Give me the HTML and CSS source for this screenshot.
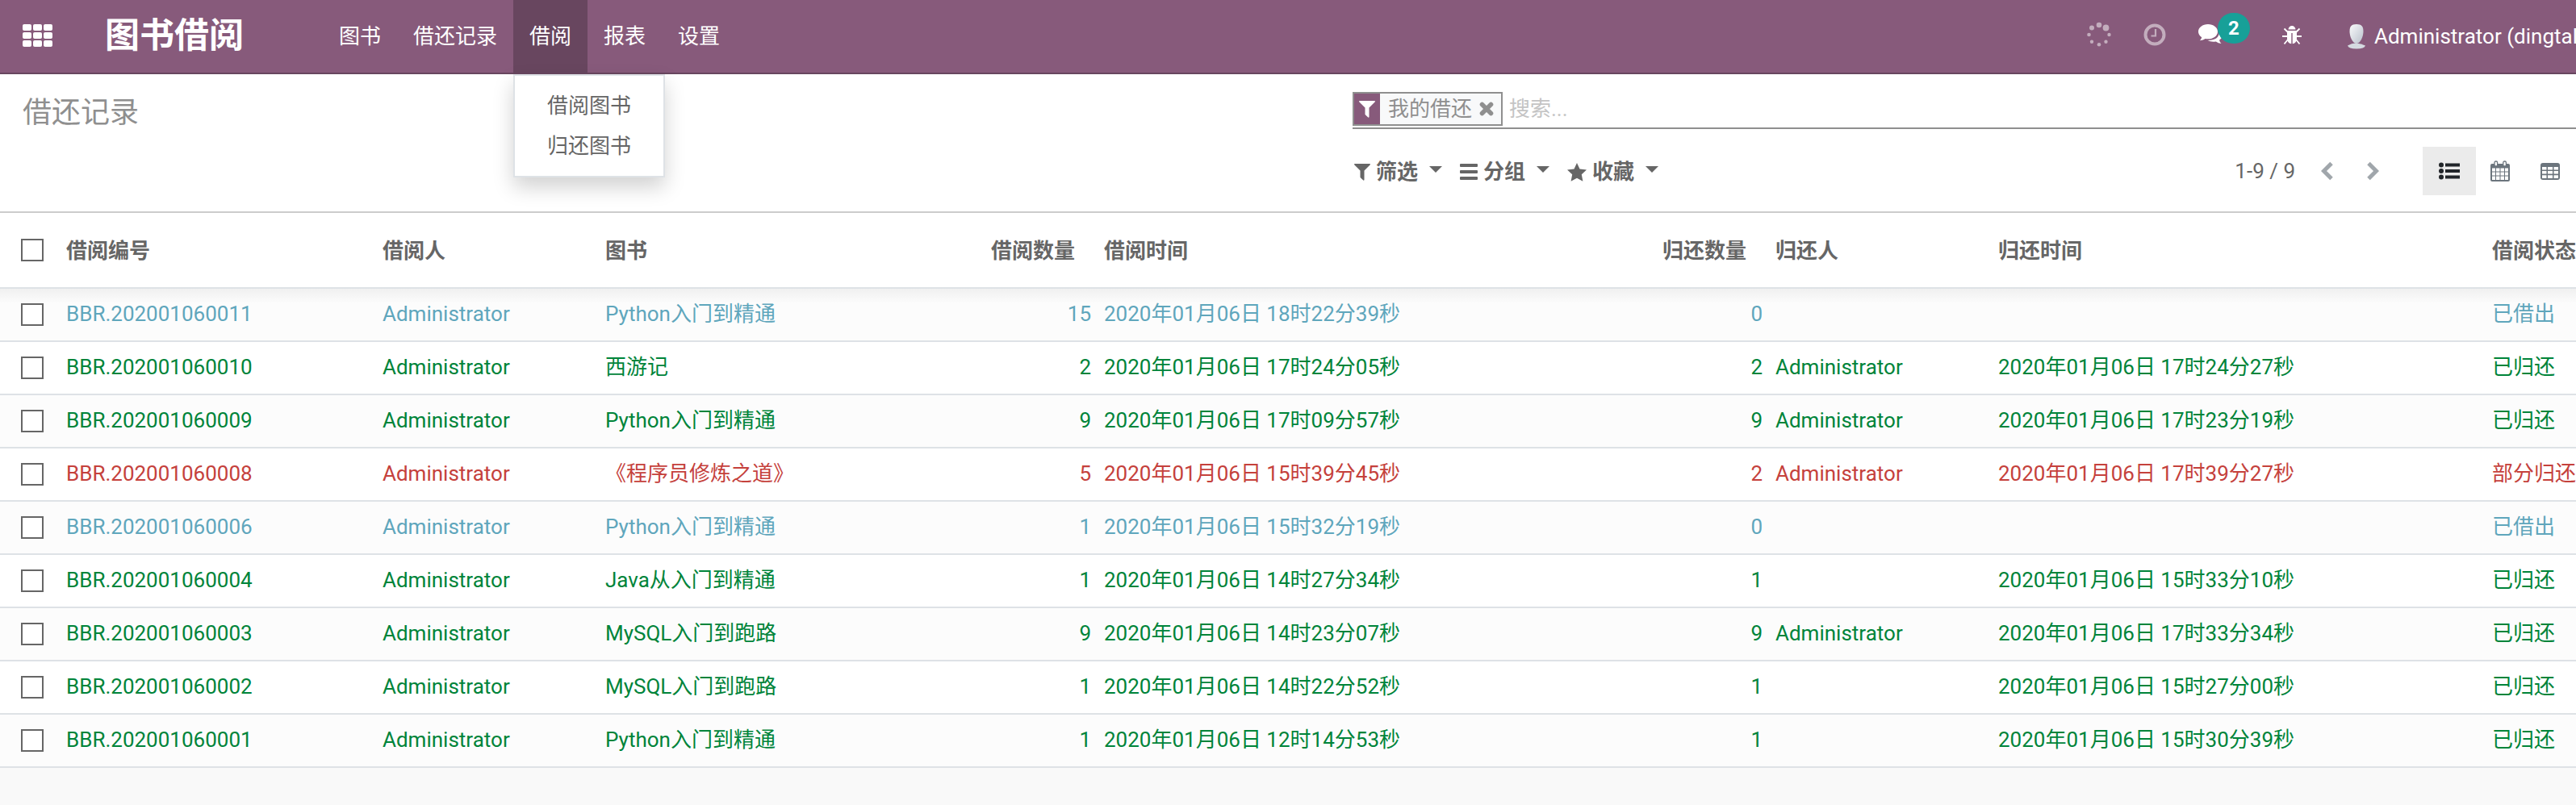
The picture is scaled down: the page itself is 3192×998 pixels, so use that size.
FILE: index.html
```html
<!DOCTYPE html>
<html lang="zh-CN">
<head>
<meta charset="utf-8">
<title>借还记录</title>
<link rel="stylesheet" href="styles.css">
</head>
<body>
<svg class="sprite" aria-hidden="true">
  <symbol id="i-funnel" viewBox="0 0 20 21"><path d="M0.6 0h18.8q.8.4.4 1.2L12.500 8.500V20q-.3 1-1.200.6L7.800 17.200q-.3-.3-.3-.7V8.500L.2 1.200Q-.2.400.6 0z"/></symbol>
  <symbol id="i-caret" viewBox="0 0 16 8"><path d="M0 0h16L8 8z"/></symbol>
</svg>

<header class="navbar">
  <button class="apps" type="button" aria-label="应用">
    <svg width="38" height="28" viewBox="0 0 38 28"><g fill="currentColor"><rect x="0" y="0" width="11" height="8" rx="2"/><rect x="13" y="0" width="11" height="8" rx="2"/><rect x="26" y="0" width="11" height="8" rx="2"/><rect x="0" y="10" width="11" height="8" rx="2"/><rect x="13" y="10" width="11" height="8" rx="2"/><rect x="26" y="10" width="11" height="8" rx="2"/><rect x="0" y="20" width="11" height="8" rx="2"/><rect x="13" y="20" width="11" height="8" rx="2"/><rect x="26" y="20" width="11" height="8" rx="2"/></g></svg>
  </button>
  <a class="brand" href="#">图书借阅</a>
  <nav class="menu">
    <a class="menu-link" href="#">图书</a>
    <a class="menu-link" href="#">借还记录</a>
    <div class="menu-group">
      <a class="menu-link active" href="#" aria-expanded="true">借阅</a>
      <div class="dropdown">
        <a class="dropdown-item" href="#">借阅图书</a>
        <a class="dropdown-item" href="#">归还图书</a>
      </div>
    </div>
    <a class="menu-link" href="#">报表</a>
    <a class="menu-link" href="#">设置</a>
  </nav>
  <div class="systray">
    <button class="tray spinner" type="button" aria-label="加载">
      <svg width="30" height="32" viewBox="0 0 30 32"><g fill="currentColor"><circle cx="15" cy="4" r="3.300"/><circle cx="23.500" cy="7.500" r="3.900"/><circle cx="27.500" cy="16" r="2.200"/><circle cx="23.500" cy="24.700" r="2.200"/><circle cx="15" cy="28.300" r="2.300"/><circle cx="6" cy="24.700" r="2.200"/><circle cx="2.500" cy="16" r="2.300"/><circle cx="6" cy="7.500" r="3"/></g></svg>
    </button>
    <button class="tray clock" type="button" aria-label="活动">
      <svg width="28" height="28" viewBox="0 0 28 28" fill="none" stroke="currentColor"><circle cx="14" cy="14" r="11.500" stroke-width="4"/><path d="M15 7v8.500H9.500" stroke-width="2.200"/></svg>
    </button>
    <button class="tray chat" type="button" aria-label="消息">
      <svg width="30" height="26" viewBox="0 0 30 26" fill="currentColor"><path d="M12 0C18.600 0 24 4 24 9.200S18.600 18.300 12 18.300q-1.700 0-3.300-.3-2.500 1.800-6.700 2.300 1.800-1.800 2.200-4.100Q0 13.400 0 9.200C0 4 5.400 0 12 0z"/><path d="M26.200 6.500Q30 9 30 13q0 4-4 6.800.4 2.200 2.500 4.200-4-.3-6.700-2.500-6.200 1-10.300-1.500 13.800.2 14.700-10.500z"/></svg>
      <span class="badge">2</span>
    </button>
    <button class="tray bug" type="button" aria-label="调试">
      <svg width="24" height="24" viewBox="0 0 24 24" fill="currentColor"><path d="M7.500 4.600a4.500 4.500 0 0 1 9 0z"/><path d="M6 6h12v10a6 6 0 0 1-5.300 6.300V9h-1.400v13.300A6 6 0 0 1 6 16z"/><path d="M2.500 3.500 7 8M21.500 3.500 17 8M0 13h6M24 13h-6M7 17l-4.500 5.500M17 17l4.500 5.500" fill="none" stroke="currentColor" stroke-width="1.800"/></svg>
    </button>
    <button class="tray user" type="button">
      <svg width="24" height="32" viewBox="0 0 24 32"><defs><linearGradient id="av" x1="0" y1="0" x2="1" y2="1"><stop offset="0" stop-color="#fafbfc"/><stop offset="1" stop-color="#b9c0cb"/></linearGradient></defs><path d="M1 27.500Q7 24 12 24.500T23 27.500Q22 31.500 12 31.500T1 27.500z" fill="#d5dae0"/><path d="M12 1C18.500 1 20.500 4 20.500 10S17 25 12 25 3.500 16 3.500 10 5.500 1 12 1z" fill="url(#av)"/></svg>
      <span>Administrator (dingtalk)</span>
    </button>
  </div>
</header>

<section class="panel">
  <h1 class="title">借还记录</h1>
  <div class="tools">
    <div class="search">
      <div class="facet">
        <span class="facet-icon"><svg width="20" height="21" fill="currentColor"><use href="#i-funnel"/></svg></span>
        <span class="facet-label">我的借还</span>
        <button class="facet-remove" type="button" aria-label="移除">
          <svg width="18" height="18" viewBox="0 0 18 18"><path d="M3.500 3.500l11 11M14.500 3.500l-11 11" stroke="currentColor" stroke-width="5.600" stroke-linecap="round"/></svg>
        </button>
      </div>
      <input class="search-input" type="text" placeholder="搜索..." aria-label="搜索">
    </div>
    <div class="row">
      <div class="filters">
        <button class="filter" type="button"><svg width="20" height="21" fill="currentColor"><use href="#i-funnel"/></svg><span>筛选</span><svg class="caret" width="16" height="8" fill="currentColor"><use href="#i-caret"/></svg></button>
        <button class="filter" type="button"><svg width="22" height="20" viewBox="0 0 22 20" fill="currentColor"><rect width="22" height="4" rx="1"/><rect y="8" width="22" height="4" rx="1"/><rect y="16" width="22" height="4" rx="1"/></svg><span>分组</span><svg class="caret" width="16" height="8" fill="currentColor"><use href="#i-caret"/></svg></button>
        <button class="filter" type="button"><svg width="24" height="23" viewBox="0 0 24 23" fill="currentColor"><path d="M12 0l3.500 7.500 8.500 1-6.200 5.700 1.600 8.500L12 18.700l-7.400 4 1.600-8.500L0 8.500l8.500-1z"/></svg><span>收藏</span><svg class="caret" width="16" height="8" fill="currentColor"><use href="#i-caret"/></svg></button>
      </div>
      <div class="pager">
        <span class="count">1-9 / 9</span>
        <button class="page" type="button" aria-label="上一页"><svg width="16" height="24" viewBox="0 0 16 24"><path d="M13 2.500L3.500 12l9.500 9.500" fill="none" stroke="currentColor" stroke-width="5"/></svg></button>
        <button class="page" type="button" aria-label="下一页"><svg width="16" height="24" viewBox="0 0 16 24"><path d="M3 2.500L12.500 12 3 21.500" fill="none" stroke="currentColor" stroke-width="5"/></svg></button>
      </div>
      <div class="views">
        <button class="view active" type="button" aria-label="列表"><svg width="26" height="22" viewBox="0 0 26 22" fill="currentColor"><circle cx="3" cy="3.500" r="3"/><circle cx="3" cy="11" r="3"/><circle cx="3" cy="18.500" r="3"/><rect x="8" y="1.500" width="18" height="4"/><rect x="8" y="9" width="18" height="4"/><rect x="8" y="16.500" width="18" height="4"/></svg></button>
        <button class="view" type="button" aria-label="日历"><svg width="24" height="26" viewBox="0 0 24 26"><rect x="0" y="4" width="24" height="22" rx="2" fill="currentColor"/><path d="M2 9.500h4v4H2zM7 9.500h4.500v4H7zM12.500 9.500H17v4h-4.500zM18 9.500h4v4h-4zM2 14.500h4v4H2zM7 14.500h4.500v4H7zM12.500 14.500H17v4h-4.500zM18 14.500h4v4h-4zM2 19.500h4V24H2zM7 19.500h4.500V24H7zM12.500 19.500H17V24h-4.500zM18 19.500h4V24h-4z" fill="#fff"/><rect x="5" y="1" width="3.600" height="6" rx="1.500" fill="#fff" stroke="currentColor" stroke-width="1.300"/><rect x="15.800" y="1" width="3.600" height="6" rx="1.500" fill="#fff" stroke="currentColor" stroke-width="1.300"/></svg></button>
        <button class="view" type="button" aria-label="透视表"><svg width="24" height="21" viewBox="0 0 24 21"><rect width="24" height="21" rx="3" fill="currentColor"/><path d="M2 5h5.500v3.600H2zM9 5h6v3.600H9zM16.500 5H22v3.600h-5.500zM2 10h5.500v3.600H2zM9 10h6v3.600H9zM16.500 10H22v3.600h-5.500zM2 15.300h5.500V19H2zM9 15.300h6V19H9zM16.500 15.300H22V19h-5.500z" fill="#fff"/></svg></button>
      </div>
    </div>
  </div>
</section>

<main class="content">
<table class="list">
  <colgroup><col class="c-check"><col class="c-no"><col class="c-user"><col class="c-book"><col class="c-qty"><col><col class="c-rqty"><col class="c-user"><col><col class="c-state"></colgroup>
  <thead>
    <tr><th class="check"><input type="checkbox" aria-label="全选"></th><th>借阅编号</th><th>借阅人</th><th>图书</th><th class="num">借阅数量</th><th>借阅时间</th><th class="num">归还数量</th><th>归还人</th><th>归还时间</th><th>借阅状态</th></tr>
  </thead>
  <tbody>
    <tr class="info"><td class="check"><input type="checkbox" aria-label="选择 0011"></td><td>BBR.202001060011</td><td>Administrator</td><td>Python入门到精通</td><td class="num">15</td><td>2020年01月06日 18时22分39秒</td><td class="num">0</td><td></td><td></td><td>已借出</td></tr>
    <tr class="success"><td class="check"><input type="checkbox" aria-label="选择 0010"></td><td>BBR.202001060010</td><td>Administrator</td><td>西游记</td><td class="num">2</td><td>2020年01月06日 17时24分05秒</td><td class="num">2</td><td>Administrator</td><td>2020年01月06日 17时24分27秒</td><td>已归还</td></tr>
    <tr class="success"><td class="check"><input type="checkbox" aria-label="选择 0009"></td><td>BBR.202001060009</td><td>Administrator</td><td>Python入门到精通</td><td class="num">9</td><td>2020年01月06日 17时09分57秒</td><td class="num">9</td><td>Administrator</td><td>2020年01月06日 17时23分19秒</td><td>已归还</td></tr>
    <tr class="danger"><td class="check"><input type="checkbox" aria-label="选择 0008"></td><td>BBR.202001060008</td><td>Administrator</td><td>《程序员修炼之道》</td><td class="num">5</td><td>2020年01月06日 15时39分45秒</td><td class="num">2</td><td>Administrator</td><td>2020年01月06日 17时39分27秒</td><td>部分归还</td></tr>
    <tr class="info"><td class="check"><input type="checkbox" aria-label="选择 0006"></td><td>BBR.202001060006</td><td>Administrator</td><td>Python入门到精通</td><td class="num">1</td><td>2020年01月06日 15时32分19秒</td><td class="num">0</td><td></td><td></td><td>已借出</td></tr>
    <tr class="success"><td class="check"><input type="checkbox" aria-label="选择 0004"></td><td>BBR.202001060004</td><td>Administrator</td><td>Java从入门到精通</td><td class="num">1</td><td>2020年01月06日 14时27分34秒</td><td class="num">1</td><td></td><td>2020年01月06日 15时33分10秒</td><td>已归还</td></tr>
    <tr class="success"><td class="check"><input type="checkbox" aria-label="选择 0003"></td><td>BBR.202001060003</td><td>Administrator</td><td>MySQL入门到跑路</td><td class="num">9</td><td>2020年01月06日 14时23分07秒</td><td class="num">9</td><td>Administrator</td><td>2020年01月06日 17时33分34秒</td><td>已归还</td></tr>
    <tr class="success"><td class="check"><input type="checkbox" aria-label="选择 0002"></td><td>BBR.202001060002</td><td>Administrator</td><td>MySQL入门到跑路</td><td class="num">1</td><td>2020年01月06日 14时22分52秒</td><td class="num">1</td><td></td><td>2020年01月06日 15时27分00秒</td><td>已归还</td></tr>
    <tr class="success"><td class="check"><input type="checkbox" aria-label="选择 0001"></td><td>BBR.202001060001</td><td>Administrator</td><td>Python入门到精通</td><td class="num">1</td><td>2020年01月06日 12时14分53秒</td><td class="num">1</td><td></td><td>2020年01月06日 15时30分39秒</td><td>已归还</td></tr>
  </tbody>
</table>
</main>
</body>
</html>
```

FILE: styles.css
```css
* { box-sizing: border-box; }
body {
  margin: 0;
  min-height: 100vh;
  overflow-x: hidden;
  background: #f9f9f9;
  color: #666;
  font: 26px/38px Roboto, "Noto Sans CJK SC", sans-serif;
}
button, input { font: inherit; color: inherit; }
button { padding: 0; border: 0; background: none; }
a { color: inherit; text-decoration: none; }
svg { display: block; flex: none; }
.sprite { position: absolute; width: 0; height: 0; }

/* Top bar */
.navbar {
  display: flex;
  height: 92px;
  padding-left: 28px;
  border-bottom: 2px solid #68465f;
  background: #875a7b;
  color: #fff;
}
.apps { display: flex; align-items: center; width: 38px; height: 88px; margin-right: 64px; }
.brand {
  margin-right: 98px;
  font-size: 43px;
  font-weight: 700;
  line-height: 88px;
  white-space: nowrap;
}
.menu { display: flex; flex: none; }
.menu-link { display: block; padding: 0 20px; line-height: 90px; height: 90px; }
.menu-link.active { background: #68465f; }
.menu-group { position: relative; }
.dropdown {
  position: absolute;
  top: 92px;
  left: 0;
  z-index: 1;
  padding: 12px 0;
  border: 2px solid #dee2e6;
  background: #fff;
  color: #666;
  box-shadow: 0 12px 24px rgba(0, 0, 0, .18);
}
.dropdown-item { display: block; padding: 0 40px; line-height: 50px; white-space: nowrap; }

.systray { display: flex; flex: none; margin-left: auto; width: 606px; overflow: hidden; }
.tray { display: flex; flex: none; align-items: center; height: 86px; }
.spinner, .clock { opacity: .5; }
.spinner { margin-right: 40px; }
.clock { margin-right: 40px; }
.chat { position: relative; margin-right: 74px; }
.badge {
  position: absolute;
  top: 16px;
  left: 24px;
  width: 40px;
  height: 38px;
  border-radius: 19px;
  background: #17a098;
  font-size: 24px;
  font-weight: 700;
  line-height: 38px;
  text-align: center;
}
.bug { margin-right: 56px; height: 88px; }
.user { gap: 10px; white-space: nowrap; height: 90px; }

/* Control panel */
.panel {
  display: grid;
  grid-template-columns: 1fr 1fr;
  column-gap: 132px;
  padding-left: 28px;
  padding-top: 22px;
  height: 172px;
  border-bottom: 2px solid #ccc;
  background: #fff;
}
.title { margin: 0; font-size: 36px; font-weight: 400; line-height: 52px; color: #8f8f8f; }
.tools { display: flex; flex-direction: column; gap: 22px; min-width: 0; }
.search {
  display: flex;
  align-items: flex-start;
  height: 46px;
  border-bottom: 2px solid #8f8f8f;
  color: #8f8f8f;
}
.facet {
  display: flex;
  align-items: stretch;
  height: 42px;
  border: 2px solid #8f8f8f;
  background: #f8f9fa;
}
.facet-icon { display: flex; align-items: center; justify-content: center; width: 32px; background: #875a7b; color: #fff; }
.facet-label { padding: 0 9px 0 10px; line-height: 38px; }
.facet-remove { display: flex; align-items: center; padding-right: 9px; }
.search-input {
  flex: 1;
  min-width: 0;
  height: 42px;
  padding: 0 8px;
  border: 0;
  outline: 0;
  background: none;
}
.search-input::placeholder { color: #c4c4c4; opacity: 1; }

.row { display: flex; align-items: center; height: 60px; }
.filters { display: flex; gap: 22px; padding-top: 2px; padding-left: 2px; }
.filter { display: flex; align-items: center; gap: 7px; font-weight: 700; }
.caret { margin-left: 7px; margin-bottom: 6px; }
.pager { display: flex; align-items: center; margin-left: auto; margin-right: 54px; }
.count { margin-right: 32px; }
.page { color: #a0a6ab; }
.page + .page { margin-left: 40px; }
.views { display: flex; }
.view { display: flex; align-items: center; height: 60px; padding: 0 20px; color: #6c757d; }
.view + .view { margin-left: -2px; }
.view.active { background: #ebebeb; color: #212529; }

/* List */
.list { width: 100%; border-collapse: separate; border-spacing: 0; table-layout: fixed; background: #fff; }
.c-check { width: 74px; }
.c-no { width: 392px; }
.c-user { width: 276px; }
.c-book { width: 430px; }
.c-qty { width: 188px; }
.c-rqty { width: 220px; }
.c-state { width: 112px; }
th, td {
  height: 66px;
  padding: 0 8px 2px;
  border-bottom: 2px solid #dee2e6;
  font-weight: 400;
  text-align: left;
  white-space: nowrap;
}
th { height: 94px; padding: 2px 8px 0; font-weight: 700; }
th:last-child, td:last-child { padding-right: 0; }
.num { text-align: right; }
th.num { padding-right: 28px; }
.check { padding: 0 0 0 26px; }
.check input {
  display: block;
  appearance: none;
  width: 28px;
  height: 28px;
  margin: 0;
  border: 2px solid #666;
  background: #fff;
}
tbody tr:nth-child(odd) { background: #fcfcfc; }
tbody tr:first-child { background: linear-gradient(#f0f0f0, #fcfcfc 18px); }
.info { color: #5fa6bc; }
.success { color: #00843a; }
.danger { color: #c5413c; }
```
